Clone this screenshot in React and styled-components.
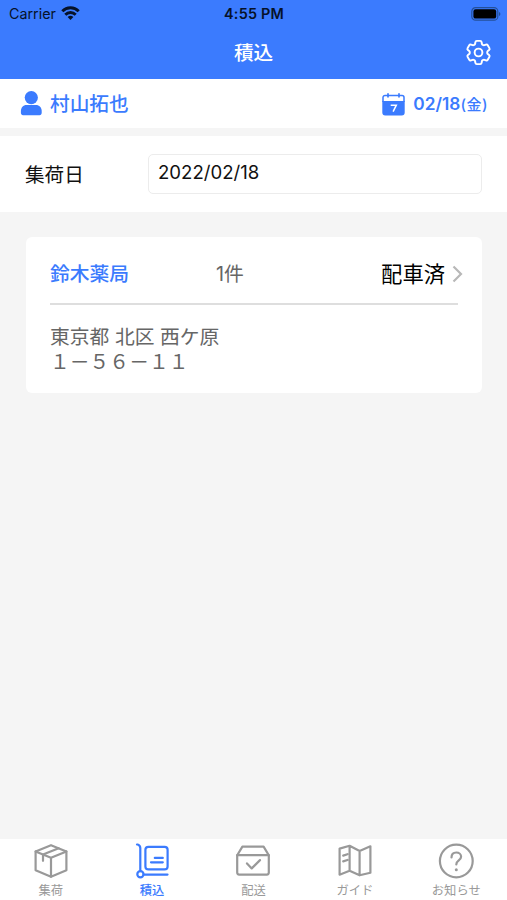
import React from "react";
import styled, { createGlobalStyle } from "styled-components";
import { HiOutlineCog6Tooth } from "react-icons/hi2";

const BLUE = "#3b7bfe";
const GREY = "#999999";

const GlobalStyle = createGlobalStyle`
  * { box-sizing: border-box; }
  body {
    margin: 0;
    background: #f5f5f5;
    font-family: Inter, "Noto Sans CJK JP", sans-serif;
    color: #111;
  }
`;

const Screen = styled.div`
  display: flex;
  flex-direction: column;
  height: 900px;
  overflow: hidden;
  background: #f5f5f5;
`;

const Header = styled.header`
  flex: none;
  height: 79px;
  background: ${BLUE};
`;

const StatusBar = styled.div`
  display: grid;
  grid-template-columns: 1fr auto 1fr;
  align-items: center;
  height: 27px;
  padding: 0 6px 0 9px;
  font-size: 14.3px;
  line-height: 20px;
  color: #061229;
`;

const Carrier = styled.div`
  display: flex;
  align-items: center;
  gap: 5px;
`;

const Time = styled.div`
  font-weight: 600;
  font-size: 14.4px;
  letter-spacing: 0.2px;
  margin-right: 2px;
`;

const BatteryHolder = styled.div`
  display: flex;
  justify-content: flex-end;
`;

const TitleBar = styled.div`
  display: grid;
  grid-template-columns: 1fr auto 1fr;
  align-items: center;
  height: 50px;
  padding: 0 13px;
  color: #fff;
`;

const Title = styled.h1`
  grid-column: 2;
  margin: 0;
  padding-top: 2px;
  font-size: 19.6px;
  line-height: 24px;
  font-weight: 500;
`;

const SettingsButton = styled.button`
  justify-self: end;
  display: flex;
  padding: 0;
  border: 0;
  background: none;
  color: #fff;
`;

const UserBar = styled.div`
  flex: none;
  display: flex;
  align-items: center;
  justify-content: space-between;
  height: 49px;
  padding: 1px 19px 0 20px;
  background: #fff;
  color: ${BLUE};
  font-weight: 500;
`;

const Group = styled.div`
  display: flex;
  align-items: center;
  gap: 8px;
`;

const UserName = styled.span`
  font-size: 19.7px;
  line-height: 24px;
`;

const DateText = styled.span`
  padding-top: 1px;
  font-size: 17.3px;
  line-height: 24px;
  font-weight: 600;
`;

const Weekday = styled.span`
  font-size: 15px;
  font-weight: 500;
  letter-spacing: 0.5px;
`;

const FilterBar = styled.div`
  flex: none;
  display: flex;
  align-items: center;
  height: 76px;
  margin-top: 8px;
  padding: 0 25px;
  background: #fff;
`;

const FilterLabel = styled.label`
  width: 123px;
  padding-top: 2px;
  font-size: 19.6px;
  line-height: 24px;
`;

const DateField = styled.div`
  flex: 1;
  height: 40px;
  padding: 0 9px;
  border: 1.5px solid #ececec;
  border-radius: 5px;
  font-size: 18.6px;
  line-height: 35px;
`;

const Content = styled.main`
  flex: 1;
  padding: 25px 25px 0 26px;
`;

const Card = styled.article`
  height: 156px;
  padding: 0 24px;
  border-radius: 6px;
  background: #fff;
  color: #666;
  font-size: 19.8px;
`;

const CardHead = styled.div`
  display: grid;
  grid-template-columns: 166px 1fr auto;
  align-items: center;
  height: 68px;
  padding-top: 7px;
  border-bottom: 2px solid #dedede;
  line-height: 24px;
`;

const ShopName = styled.span`
  color: ${BLUE};
  font-weight: 500;
`;

const Status = styled.span`
  display: flex;
  align-items: center;
  gap: 7px;
  margin-right: -5px;
  font-size: 21.3px;
  color: #000;
`;

const Address = styled.p`
  margin: 20px 0 0;
  line-height: 24.5px;
`;

const TabBar = styled.nav`
  flex: none;
  display: grid;
  grid-template-columns: repeat(5, 1fr);
  height: 61px;
  background: #fff;
`;

const Tab = styled.a`
  display: flex;
  flex-direction: column;
  align-items: center;
  gap: 3px;
  padding-top: 3px;
  color: ${(p) => (p.$active ? BLUE : GREY)};
  font-size: 12.3px;
  line-height: 16px;
  font-weight: ${(p) => (p.$active ? 500 : 400)};
`;

const Line = styled.svg`
  display: block;
  fill: none;
  stroke: currentColor;
  stroke-width: 2.2;
  stroke-linejoin: round;
  stroke-linecap: round;
`;

const WifiIcon = () => (
  <svg width="19" height="15" viewBox="0 0 19 15" fill="none" stroke="#061229" strokeWidth="2.9">
    <path d="M1.300 5.200a11.600 11.600 0 0 1 16.400 0" />
    <path d="M4.300 8.700a7.400 7.400 0 0 1 10.400 0" />
    <path d="M9.500 14 6.600 11.100a4.100 4.100 0 0 1 5.800 0z" fill="#061229" stroke="none" />
  </svg>
);

const BatteryIcon = () => (
  <svg width="30" height="14" viewBox="0 0 30 14">
    <rect x="0.8" y="0.6" width="26" height="12.6" rx="3.8" fill="none" stroke="#245099" strokeWidth="1.2" />
    <rect x="2.4" y="2.2" width="22.8" height="9.4" rx="2.2" fill="#000" />
    <path d="M28 5v4q1.4-.7 1.4-2T28 5z" fill="#245099" />
  </svg>
);

const PersonIcon = () => (
  <svg width="22" height="26" viewBox="0 0 22 26" fill="currentColor">
    <circle cx="11.300" cy="6.600" r="6.600" />
    <path d="M6.500 13.900h9.400c3.400 0 5.800 2.600 5.800 6v2.200c0 1.200-.9 2.100-2.100 2.100H3c-1.200 0-2.100-.9-2.100-2.100v-2.200c0-3.400 2.300-6 5.600-6z" />
  </svg>
);

const CalendarIcon = () => (
  <svg width="23" height="23" viewBox="0 0 23 23" fill="none" stroke="currentColor">
    <path d="M.3 8h22.400v11.400a3 3 0 0 1-3 3H3.300a3 3 0 0 1-3-3z" fill="currentColor" stroke="none" />
    <path d="M1 9V4.500a2 2 0 0 1 2-2h17a2 2 0 0 1 2 2V9" strokeWidth="1.5" />
    <path d="M6 .3v4.200M17 .3v4.200" strokeWidth="1.7" />
    <path d="M8.700 12.200h5.600l-3.200 6.500" stroke="#fff" strokeWidth="1.5" />
  </svg>
);

const BoxIcon = () => (
  <Line width="36" height="38" viewBox="0 0 36 38">
    <path d="M18 3.200 33.400 9.400v18.800L18 34.700 2.600 28.200V9.400z" />
    <path d="M2.600 9.400 18 15.800l15.400-6.400M18 15.800v18.900M25.700 6.300 10 12.600v6.200" />
  </Line>
);

const CartIcon = () => (
  <Line width="36" height="38" viewBox="-1 0 36 38">
    <path d="M2 2.500h.7q2.600.8 2.600 3.600v23" />
    <circle cx="5.400" cy="32.200" r="3.100" />
    <path d="M8.700 32.600h23.800" />
    <rect x="10.400" y="4.800" width="22.200" height="22.600" rx="3" />
    <path d="M19.800 15.900h8M16 20.300h11.800" />
  </Line>
);

const DeliveryIcon = () => (
  <Line width="36" height="38" viewBox="0 0 36 38">
    <path d="M2.200 13.200h31.600v17.400a2 2 0 0 1-2 2H4.200a2 2 0 0 1-2-2z" />
    <path d="m2.200 13.200 5.200-8.600H28.600l5.200 8.600M12 21.400l4.700 5 8.300-8.300" />
  </Line>
);

const MapIcon = () => (
  <Line width="36" height="38" viewBox="0 0 36 38">
    <path d="M2.600 6.600 12.600 3.800l10 5.200 10.800-4.700v26.400L22.600 33.300l-10-4.500-10 3.900zM12.600 3.800v25M22.600 9v24.300M6.200 13.600l4.200-1.400M6.200 19.400l4.200-1.400" />
  </Line>
);

const HelpIcon = () => (
  <Line width="36" height="38" viewBox="0 0 36 38">
    <circle cx="18.300" cy="19" r="16.400" />
    <path d="M13.500 15.400c0-3.100 2-4.900 4.800-4.900s4.800 1.800 4.800 4.300c0 3.700-4.800 3.600-4.800 7.600" />
    <circle cx="18.300" cy="27.700" r="1.500" fill="currentColor" stroke="none" />
  </Line>
);

const ChevronIcon = () => (
  <svg width="11" height="18" viewBox="0 0 11 18" fill="none" stroke="#b8b8b8" strokeWidth="2.2">
    <path d="m1.500 1.500 7.500 7.500-7.500 7.500" />
  </svg>
);

const TABS = [
  { label: "集荷", Icon: BoxIcon },
  { label: "積込", Icon: CartIcon, active: true },
  { label: "配送", Icon: DeliveryIcon },
  { label: "ガイド", Icon: MapIcon },
  { label: "お知らせ", Icon: HelpIcon },
];

export default function App() {
  return (
    <Screen>
      <GlobalStyle />
      <Header>
        <StatusBar>
          <Carrier>
            Carrier
            <WifiIcon />
          </Carrier>
          <Time>4:55 PM</Time>
          <BatteryHolder>
            <BatteryIcon />
          </BatteryHolder>
        </StatusBar>
        <TitleBar>
          <Title>積込</Title>
          <SettingsButton aria-label="設定">
            <HiOutlineCog6Tooth size={31} />
          </SettingsButton>
        </TitleBar>
      </Header>
      <UserBar>
        <Group>
          <PersonIcon />
          <UserName>村山拓也</UserName>
        </Group>
        <Group>
          <CalendarIcon />
          <DateText>
            02/18<Weekday>(金)</Weekday>
          </DateText>
        </Group>
      </UserBar>
      <FilterBar>
        <FilterLabel>集荷日</FilterLabel>
        <DateField>2022/02/18</DateField>
      </FilterBar>
      <Content>
        <Card>
          <CardHead>
            <ShopName>鈴木薬局</ShopName>
            <span>1件</span>
            <Status>
              配車済
              <ChevronIcon />
            </Status>
          </CardHead>
          <Address>
            東京都 北区 西ケ原
            <br />
            １－５６－１１
          </Address>
        </Card>
      </Content>
      <TabBar>
        {TABS.map(({ label, Icon, active }) => (
          <Tab key={label} $active={active}>
            <Icon />
            {label}
          </Tab>
        ))}
      </TabBar>
    </Screen>
  );
}
